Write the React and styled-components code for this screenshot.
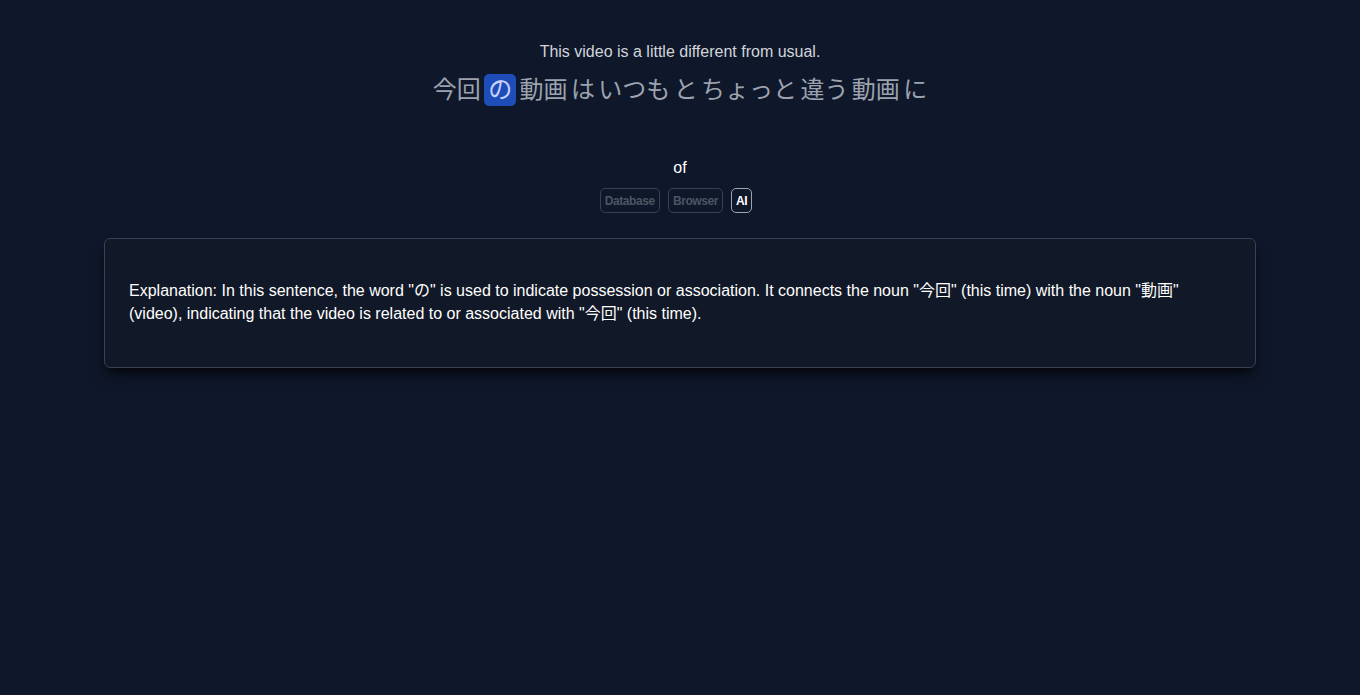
import React from "react";
import styled, { createGlobalStyle } from "styled-components";

const GlobalStyle = createGlobalStyle`
  html, body {
    margin: 0;
    padding: 0;
    background: #0f172a;
  }
  body {
    font-family: "Liberation Sans", Arial, "Noto Sans CJK JP", sans-serif;
    color: #ffffff;
    min-height: 695px;
  }
`;

const Page = styled.main`
  min-height: 695px;
  background: #0f172a;
  padding: 40px 104px 0 104px;
  box-sizing: border-box;
  display: flex;
  flex-direction: column;
  align-items: center;
`;

const Translation = styled.p`
  margin: 0;
  font-size: 16px;
  line-height: 24px;
  color: #d1d5db;
  text-align: center;
`;

const Sentence = styled.div`
  margin-top: 10px;
  display: flex;
  align-items: center;
  justify-content: center;
  gap: 3.4px;
  font-family: "Noto Sans CJK JP", "Liberation Sans", sans-serif;
  font-size: 24px;
  line-height: 32px;
`;

const Token = styled.span`
  display: inline-block;
  height: 32px;
  line-height: 27px;
  padding: 0 ${(p) => (p.$active ? "4px" : "0")};
  border-radius: 5px;
  color: ${(p) => (p.$active ? "#c7d2fe" : "#9ca3af")};
  background: ${(p) => (p.$active ? "#1e4db7" : "transparent")};
`;

const Word = styled.p`
  margin: 50px 0 0;
  font-size: 16px;
  line-height: 24px;
  color: #ffffff;
`;

const Sources = styled.div`
  margin-top: 8px;
  display: flex;
  gap: 8px;
  padding-right: 8px;
`;

const SourceButton = styled.button`
  font-family: "Liberation Sans", Arial, sans-serif;
  font-weight: 700;
  font-size: 12px;
  letter-spacing: -0.4px;
  height: 25px;
  padding: 0 4px;
  border-radius: 5px;
  background: transparent;
  border: 1px solid ${(p) => (p.$active ? "#9ca3af" : "#374151")};
  color: ${(p) => (p.$active ? "#ffffff" : "#4b5563")};
  cursor: pointer;
`;

const Card = styled.section`
  margin-top: 25px;
  align-self: stretch;
  border: 1px solid #374151;
  border-radius: 6px;
  background: #111827;
  box-shadow: 0 10px 15px -3px rgba(0, 0, 0, 0.6), 0 4px 6px -4px rgba(0, 0, 0, 0.6);
  padding: 24px;
`;

const Explanation = styled.p`
  margin: 16px 0 18px;
  font-size: 16px;
  line-height: 23px;
  color: #ffffff;
  font-family: "Liberation Sans", Arial, "Noto Sans CJK JP", sans-serif;
`;

const tokens = ["今回", "の", "動画", "は", "いつも", "と", "ちょっと", "違う", "動画", "に"];

export default function App() {
  return (
    <>
      <GlobalStyle />
      <Page>
        <Translation>This video is a little different from usual.</Translation>
        <Sentence>
          {tokens.map((t, i) => (
            <Token key={i} $active={i === 1}>
              {t}
            </Token>
          ))}
        </Sentence>
        <Word>of</Word>
        <Sources>
          <SourceButton>Database</SourceButton>
          <SourceButton>Browser</SourceButton>
          <SourceButton $active>AI</SourceButton>
        </Sources>
        <Card>
          <Explanation>
            Explanation: In this sentence, the word "の" is used to indicate possession or association. It
            connects the noun "今回" (this time) with the noun "動画" (video), indicating that the video is
            related to or associated with "今回" (this time).
          </Explanation>
        </Card>
      </Page>
    </>
  );
}
